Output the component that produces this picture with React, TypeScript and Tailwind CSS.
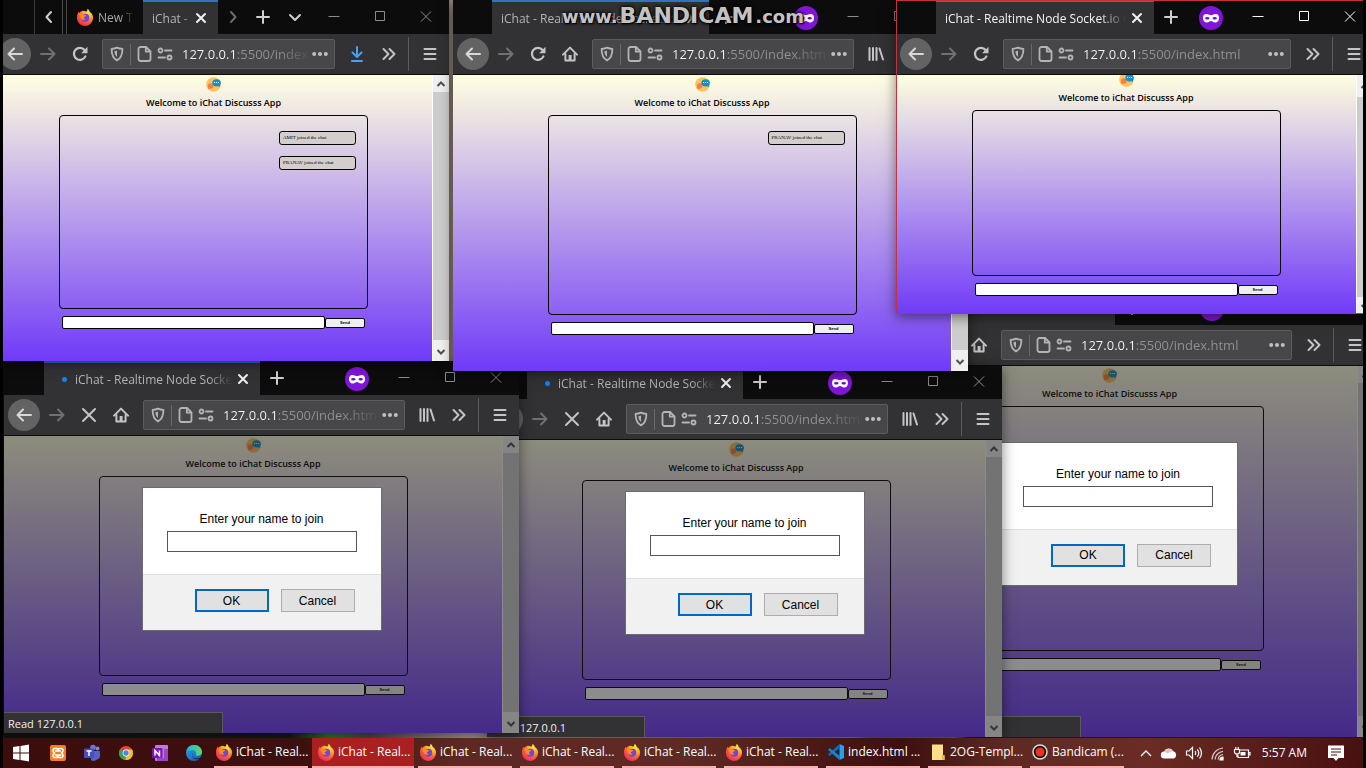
import React, { useId } from "react";
import type { ReactNode } from "react";

const ui = "font-['Open_Sans','Noto_Sans',sans-serif]";

/* ---------- shared gradients ---------- */

function SharedDefs() {
  return (
    <svg className="absolute h-0 w-0" aria-hidden="true">
      <defs>
        <radialGradient id="fox" cx="0.75" cy="0.15" r="1">
          <stop offset="0" stopColor="#ffe84a" />
          <stop offset="0.35" stopColor="#ffae2a" />
          <stop offset="0.65" stopColor="#ff5b36" />
          <stop offset="1" stopColor="#e5225d" />
        </radialGradient>
        <linearGradient id="edge" x1="0" y1="0" x2="1" y2="1">
          <stop offset="0" stopColor="#2aa6d8" />
          <stop offset="0.5" stopColor="#1c7fd0" />
          <stop offset="1" stopColor="#0f4fa0" />
        </linearGradient>
        <linearGradient id="edgeTop" x1="0" y1="0" x2="1" y2="0">
          <stop offset="0" stopColor="#22b3d8" />
          <stop offset="1" stopColor="#5fd66a" />
        </linearGradient>
      </defs>
    </svg>
  );
}

/* ---------- browser icons ---------- */

type Glyph = { children: ReactNode; w?: number };

function Stroke({ children, w = 2 }: Glyph) {
  return (
    <svg width="16" height="16" viewBox="0 0 16 16" fill="none" stroke="currentColor" strokeWidth={w} strokeLinecap="round" strokeLinejoin="round" className="shrink-0" aria-hidden="true">
      {children}
    </svg>
  );
}

const Back = () => <Stroke><path d="M15 8H1.5M7 2.5L1.5 8 7 13.5" /></Stroke>;
const Forward = () => <Stroke><path d="M1 8h13.5M9 2.5L14.5 8 9 13.5" /></Stroke>;
const Reload = () => (
  <Stroke w={2.2}>
    <path d="M13.4 10.4A6 6 0 1 1 12.6 4" />
    <path d="M15.5 0.800v6.400H9.100z" fill="currentColor" stroke="none" />
  </Stroke>
);
const Stop = () => <Stroke><path d="M2 2l12 12M14 2L2 14" /></Stroke>;
const Home = () => (
  <Stroke>
    <path d="M1 8.6L8 1.6l7 7" />
    <path d="M3.4 8v6.6h9.2V8" />
    <path d="M6.6 9h3v5.6h-3z" fill="currentColor" stroke="none" />
  </Stroke>
);
const Shield = () => (
  <Stroke w={1.8}>
    <path d="M8 1.6c1.8.9 3.6 1.2 5.4 1.3 0 5-.9 9-5.4 11.5C3.5 11.9 2.6 7.9 2.6 2.9 4.4 2.8 6.2 2.5 8 1.6z" />
    <path d="M8 4.6v6.4c-1.7-1.3-2.5-3.2-2.6-5.7.9-.1 1.8-.3 2.6-.7z" fill="currentColor" stroke="none" />
  </Stroke>
);
const PageIcon = () => (
  <Stroke w={1.8}>
    <path d="M3.5 1H9l4.500 4.500V13a2 2 0 0 1-2 2h-8a2 2 0 0 1-2-2V3a2 2 0 0 1 2-2z" />
    <path d="M8.8 1.2v4.500h4.500" />
  </Stroke>
);
const Perms = () => (
  <Stroke w={1.8}>
    <circle cx="3.5" cy="4.5" r="2" />
    <path d="M8 4.5h6.500M1.500 11.500H8" />
    <circle cx="12.5" cy="11.5" r="2" />
  </Stroke>
);
const Dots = () => (
  <svg width="16" height="16" viewBox="0 0 16 16" fill="currentColor" className="shrink-0" aria-hidden="true">
    <circle cx="2.2" cy="8" r="2" /><circle cx="8" cy="8" r="2" /><circle cx="13.8" cy="8" r="2" />
  </svg>
);
const Library = () => <Stroke><path d="M1.5 2v12M5 2v12M8.500 2v12M11.500 2.500l3.500 11" /></Stroke>;
const More = () => <Stroke><path d="M2.5 3l5 5-5 5M8.500 3l5 5-5 5" /></Stroke>;
const Menu = () => <Stroke><path d="M2.5 3h11M2.500 8h11M2.500 13h11" /></Stroke>;
const Download = () => <Stroke><path d="M8 1v9.500M3.500 6.500L8 11l4.500-4.500M3 15h10" /></Stroke>;
const Plus = () => <Stroke><path d="M8 2v12M2 8h12" /></Stroke>;
const Cross = () => <Stroke><path d="M4 4l8 8M12 4l-8 8" /></Stroke>;
const ChevDown = () => <Stroke><path d="M3 6l5 5 5-5" /></Stroke>;
const ChevLeft = () => <Stroke><path d="M10 3L5.500 8l4.500 5" /></Stroke>;
const ChevRight = () => <Stroke><path d="M6 3l4.500 5L6 13" /></Stroke>;

function Firefox() {
  return (
    <svg width="18" height="18" viewBox="0 0 18 18" className="shrink-0" aria-hidden="true">
      <path d="M11.5 0.800c1.500 1 2 2 2.200 3.100 1.600.8 3.600 3 3.400 6.100a8.100 8.100 0 0 1-16.200-.4C.9 7 1.700 5.200 2.700 3.500l.4 1.400C4 4 5 3.200 6.200 2.900c1.600-.3 3 .2 4 .8.900-.7 1.300-1.700 1.300-2.900z" fill="url(#fox)" />
      <circle cx="9.3" cy="9.8" r="4" fill="#7543d8" />
      <path d="M2.8 6.500c1.500-1 3.500-.9 4.900.1 1 .6 2.200.5 2.400 1-.3 1-1.700 1-2.200 1.800-.3.600.5 1.700 1.700 1.500-1 1.300-3.400 1.200-4.400-.5-.9-1.500-.6-2.600-2.400-3.900z" fill="#ff8a2c" />
    </svg>
  );
}

function Mask() {
  return (
    <svg width="24" height="24" viewBox="0 0 24 24" className="shrink-0" role="img" aria-label="Private browsing">
      <circle cx="12" cy="12" r="12" fill="#8015d8" />
      <path d="M4 12c0-2.800 1.200-4 3.200-4 2 0 3 1.100 4.800 1.100S14.800 8 16.800 8c2 0 3.200 1.200 3.200 4s-1.500 4.500-3.800 4.500c-2.100 0-2.700-1.500-4.200-1.500s-2.100 1.500-4.200 1.500C5.500 16.500 4 14.800 4 12z" fill="#fff" />
      <ellipse cx="8.3" cy="12.3" rx="2.2" ry="1.3" fill="#6a10bd" />
      <ellipse cx="15.7" cy="12.3" rx="2.2" ry="1.3" fill="#6a10bd" />
    </svg>
  );
}

/* ---------- window frame ---------- */

function IconButton({ label, children, className = "w-8" }: { label: string; children: ReactNode; className?: string }) {
  return (
    <button type="button" aria-label={label} className={`flex h-8 shrink-0 items-center justify-center ${className}`}>
      {children}
    </button>
  );
}

function Caption({ active }: { active?: boolean }) {
  const tone = active ? "text-white" : "text-[#8c8c8c]";
  return (
    <div className={`flex shrink-0 ${tone}`}>
      {[
        ["Minimize", "M6.500 5.500h11"],
        ["Maximize", "M7.500 0.500h9v9h-9z"],
        ["Close", "M7 0.500l10 10M17 0.500l-10 10"],
      ].map(([label, d]) => (
        <button key={label} type="button" aria-label={label} className="flex h-[33px] w-[46px] items-center justify-center">
          <svg width="24" height="11" viewBox="0 0 24 11" fill="none" stroke="currentColor" aria-hidden="true"><path d={d} /></svg>
        </button>
      ))}
    </div>
  );
}

function Tab({ active, loading, className }: { active?: boolean; loading?: boolean; className: string }) {
  return (
    <div className={`flex h-full shrink-0 items-center border-t-2 border-[#2d74c4] bg-[#323234] pr-[9px] ${loading ? "pl-[18px]" : "pl-[9px]"} ${className}`}>
      {loading && <span className="mr-2 h-[5px] w-[5px] shrink-0 rounded-full bg-[#0a84ff]" />}
      <button type="button" className={`min-w-0 flex-1 overflow-hidden whitespace-nowrap pt-[2px] text-left text-[12px] leading-4 [mask-image:linear-gradient(to_right,#000_85%,transparent)] ${active ? "text-[#f4f4f4]" : "text-[#b4b4b4]"}`}>
        iChat - Realtime Node Socket.io C
      </button>
      <button type="button" aria-label="Close tab" className="ml-[3px] shrink-0 text-[#f0f0f0]"><Cross /></button>
    </div>
  );
}

function AddressBar({ wide }: { wide?: boolean }) {
  return (
    <div className="mx-[6px] flex h-[30px] min-w-0 flex-1 items-center rounded-[2px] border border-[#5c5c5e] bg-[#474749] pl-[6px] pr-[6px] text-[#b4b4b4]">
      <Shield />
      <span className="ml-[5px] h-[21px] w-px shrink-0 bg-[#69696b]" />
      <span className="ml-[6px] flex"><PageIcon /></span>
      <span className="ml-1 flex"><Perms /></span>
      <input
        aria-label="Address"
        readOnly
        value="127.0.0.1:5500/index.html"
        className={`ml-[9px] w-0 min-w-0 flex-1 bg-[linear-gradient(to_right,#f6f6f6_55px,#929292_55px)] bg-clip-text text-[13px] leading-5 text-transparent outline-none ${wide ? "" : "[mask-image:linear-gradient(to_right,#000_75%,transparent)]"}`}
      />
      <button type="button" aria-label="Page actions" className="ml-[1px] shrink-0 text-[#c0c0c0]"><Dots /></button>
    </div>
  );
}

type NavProps = { stop?: boolean; home?: boolean; library?: boolean; download?: boolean; wide?: boolean };

function NavBar({ stop, home, library, download, wide }: NavProps) {
  return (
    <div className="flex h-[41px] shrink-0 items-center border-b border-[#0c0c0d] bg-[#323234] pl-1 pr-[3px] text-[#c4c4c4]">
      <IconButton label="Back" className="w-8 rounded-full bg-[#636363] text-[#d8d8d8]"><Back /></IconButton>
      <IconButton label="Forward" className="w-[33px] text-[#707070]"><Forward /></IconButton>
      <IconButton label={stop ? "Stop" : "Reload"}>{stop ? <Stop /> : <Reload />}</IconButton>
      {home && <IconButton label="Home"><Home /></IconButton>}
      <AddressBar wide={wide} />
      {library && <IconButton label="Library"><Library /></IconButton>}
      {download && <IconButton label="Downloads" className="w-8 text-[#45a1ff]"><Download /></IconButton>}
      <IconButton label="More tools"><More /></IconButton>
      <span className="ml-[3px] mr-[5px] h-[34px] w-px shrink-0 bg-[#5a5a5c]" />
      <IconButton label="Menu"><Menu /></IconButton>
    </div>
  );
}

function ScrollBar({ upper = "h-[17px]", lower = "h-[21px]" }: { upper?: string; lower?: string }) {
  const box = "flex w-full shrink-0 items-center justify-center bg-[#f0f0f0] text-[#505050]";
  return (
    <div className="flex w-[17px] shrink-0 flex-col border-l border-white bg-[#cdcdcd]">
      <div className={`${box} ${upper}`}>
        <svg width="10" height="10" viewBox="0 0 10 10" fill="none" stroke="currentColor" strokeWidth="2" aria-hidden="true"><path d="M1.500 7L5 3.500 8.500 7" /></svg>
      </div>
      <div className="flex-1" />
      <div className={`${box} ${lower}`}>
        <svg width="10" height="10" viewBox="0 0 10 10" fill="none" stroke="currentColor" strokeWidth="2" aria-hidden="true"><path d="M1.500 4L5 7.500 8.500 4" /></svg>
      </div>
    </div>
  );
}

/* ---------- chat page ---------- */

function ChatLogo() {
  return (
    <svg width="15" height="15" viewBox="0 0 15 15" className="shrink-0" role="img" aria-label="iChat logo">
      <circle cx="7.5" cy="7.5" r="7.3" fill="#fcc55c" />
      <circle cx="4.6" cy="9" r="2.8" fill="#ff7e45" />
      <path d="M2 12l1-2.500 2.400 1.600z" fill="#ff7e45" />
      <ellipse cx="10.6" cy="5.8" rx="4.3" ry="3.6" fill="#1390c8" />
      <path d="M11.5 8.500l2.600 1.700-.3-3z" fill="#1390c8" />
      <path d="M8.100 5.500h1M10.100 5.500h1M12.100 5.500h1" stroke="#fff" strokeWidth="1" />
    </svg>
  );
}

function ChatPage({ box, messages = [], scrolled }: { box: string; messages?: string[]; scrolled?: boolean }) {
  return (
    <div className="flex min-w-0 flex-1 flex-col items-center overflow-hidden bg-[linear-gradient(to_bottom,#ffffe0,#703af8)]">
      <div className={`flex shrink-0 flex-col items-center pt-[2px] ${scrolled ? "-mt-[5px]" : ""}`}>
        <ChatLogo />
        <h1 className="mt-[5px] mb-[6px] whitespace-nowrap text-[9px] font-semibold leading-3 text-black">Welcome to iChat Discusss App</h1>
        <div className={`flex w-[309px] flex-col items-end gap-[11px] rounded-[4px] border border-black pr-[11px] pt-[15px] ${box}`}>
          {messages.map((m) => (
            <p key={m} className="h-[14px] w-[77px] rounded-[3px] border border-black bg-[#d3cdcb] pl-[3px] font-['Liberation_Serif',serif] text-[5px] leading-3 text-black">{m}</p>
          ))}
        </div>
        <form className="mt-[7px] flex items-center" onSubmit={(e) => e.preventDefault()}>
          <input aria-label="Message" className="h-[13px] w-[263px] rounded-[2px] border border-black bg-white px-1 text-[8px] outline-none" />
          <button type="submit" className="h-[10px] w-10 rounded-[2px] border border-black bg-[#efefef] font-['Liberation_Sans',sans-serif] text-[4px] font-bold leading-[8px] text-black">Send</button>
        </form>
      </div>
    </div>
  );
}

function Prompt() {
  const id = useId();
  const button = "h-[23px] w-[74px] bg-[#e1e1e1] text-[12px] leading-4 text-black";
  return (
    <div className="absolute inset-0 flex flex-col items-center bg-[#1a1a1a]/50">
      <div className="flex-1" />
      <div role="dialog" aria-modal="true" className="w-[240px] shrink-0 border border-[#6b6b6b] bg-[#f1f1f1] font-['Liberation_Sans',Arial,sans-serif]">
        <div className="flex h-[87px] flex-col items-center border-b border-[#dfdfdf] bg-white pt-[23px]">
          <label htmlFor={id} className="text-[12px] leading-4 text-black">Enter your name to join</label>
          <input id={id} type="text" className="mt-1 h-[21px] w-[190px] border border-[#555] bg-white px-1 text-[12px] outline-none" />
        </div>
        <div className="flex h-[55px] justify-end gap-3 pr-[26px] pt-[14px]">
          <button type="button" className={`${button} border-2 border-[#0067c5]`}>OK</button>
          <button type="button" className={`${button} border border-[#adadad]`}>Cancel</button>
        </div>
      </div>
      <div className="flex-[2]" />
    </div>
  );
}

function Status({ text, className }: { text: string; className: string }) {
  return (
    <div className={`absolute bottom-0 left-0 h-[21px] whitespace-nowrap border-r border-t border-[#5a5a5c] bg-[#323234] pl-1 pt-px text-[11px] leading-5 text-[#f0f0f0] ${className}`}>{text}</div>
  );
}

type WindowProps = {
  place: string;
  title: ReactNode;
  nav: NavProps;
  page: ReactNode;
  scroll?: ReactNode;
  prompt?: boolean;
  status?: ReactNode;
  active?: boolean;
  priv?: boolean;
};

function BrowserWindow({ place, title, nav, page, scroll, prompt, status, active, priv = true }: WindowProps) {
  return (
    <section className={`absolute flex flex-col overflow-hidden bg-[#0c0c0d] shadow-[0_3px_12px_rgba(0,0,0,0.5)] ${place}`}>
      <div className="flex h-[34px] shrink-0 items-start">
        {title}
        <div className="flex-1" />
        {priv && <span className="mr-[12px] mt-[6px]"><Mask /></span>}
        <Caption active={active} />
      </div>
      <NavBar {...nav} />
      <div className="relative flex min-h-0 flex-1">
        {page}
        {scroll ?? <ScrollBar />}
        {prompt && <Prompt />}
        {status}
      </div>
      {active && <div className="pointer-events-none absolute inset-0 border border-[#c8303a]" />}
    </section>
  );
}

function NewTab({ className = "" }: { className?: string }) {
  return <button type="button" aria-label="New tab" className={`mt-[9px] shrink-0 text-[#cfcfcf] ${className}`}><Plus /></button>;
}

/* ---------- taskbar ---------- */

function Task({ icon, label, active }: { icon: ReactNode; label: string; active?: boolean }) {
  return (
    <button type="button" className={`flex h-full shrink-0 items-center gap-[3px] whitespace-nowrap border-b-2 border-[#ffadad] text-[12px] text-white ${active ? "-mx-1 w-[102px] bg-[#a82020] pl-[5px]" : "w-[94px] pl-[1px]"}`}>
      {icon}
      <span>{label}</span>
    </button>
  );
}

const VsCode = () => (
  <svg width="18" height="18" viewBox="0 0 18 18" className="shrink-0" aria-hidden="true">
    <path d="M12.5 1L17 3v12l-4.500 2z" fill="#23a0ee" />
    <path d="M12.5 1L1 11.300l1.600 1.600L13 5z" fill="#0a6ab8" />
    <path d="M12.5 17L1 6.700l1.600-1.600L13 13z" fill="#1284d4" />
  </svg>
);
const Folder = () => (
  <svg width="18" height="18" viewBox="0 0 18 18" className="shrink-0" aria-hidden="true">
    <path d="M3 1.500h11v11h1.500V17H3z" fill="#ffe08a" /><path d="M13 12h2.500v5H13z" fill="#f0b93a" />
  </svg>
);
const Recorder = () => (
  <svg width="18" height="18" viewBox="0 0 18 18" className="shrink-0" aria-hidden="true">
    <circle cx="9" cy="9" r="7" fill="#111" stroke="#dcdcdc" strokeWidth="1.5" /><circle cx="9" cy="9" r="4.5" fill="#ee3124" />
  </svg>
);

const launchers: { label: string; art: ReactNode }[] = [
  { label: "Start", art: <path d="M1 3l6.500-1v6.500H1zM8.500 1.900L17 .6v7.900H8.500zM1 9.500h6.500V16L1 15zM8.500 9.500H17v7.900l-8.500-1.300z" fill="#fff" /> },
  {
    label: "XAMPP",
    art: (
      <>
        <rect x="1" y="1" width="16" height="16" rx="2" fill="#f37d22" />
        <path d="M5 4.500h3l1 1.500 1-1.500h3c1.500 1.500 1.300 3-.5 4.500 1.800 1.500 2 3 .5 4.500h-3L9 12l-1 1.500H5c-1.500-1.500-1.300-3 .5-4.500-1.800-1.500-2-3-.5-4.500zM6 7h6M6 11.200h6" fill="none" stroke="#fff" strokeWidth="1.7" strokeLinejoin="round" />
      </>
    ),
  },
  {
    label: "Teams",
    art: (
      <>
        <circle cx="14.5" cy="4.5" r="2" fill="#7b83eb" /><circle cx="10" cy="3.5" r="2.8" fill="#6a74e0" />
        <path d="M8 7h9v5a3.500 3.500 0 0 1-3 3.500A5 5 0 0 1 8 16z" fill="#5560c8" />
        <rect x="1" y="4.5" width="10" height="9.5" rx="1" fill="#4650bd" />
        <path d="M3.500 7h5M6 7v5" stroke="#fff" strokeWidth="1.5" />
      </>
    ),
  },
  {
    label: "Chrome",
    art: (
      <>
        <circle cx="9" cy="9" r="7" fill="#e2453a" />
        <path d="M9 9L2.900 5.500A7 7 0 0 0 8.500 16z" fill="#34a353" /><path d="M9 9h7a7 7 0 0 1-7.500 7z" fill="#fbc116" />
        <path d="M9 9V5.500h6.100A7 7 0 0 1 16 9z" fill="#fbc116" />
        <circle cx="9" cy="9" r="3.4" fill="#fff" /><circle cx="9" cy="9" r="2.7" fill="#4285f4" />
      </>
    ),
  },
  {
    label: "OneNote",
    art: (
      <>
        <rect x="4" y="1" width="13" height="16" rx="1" fill="#c179e0" /><path d="M13 5h4v12H6v-3h7z" fill="#9a45c8" />
        <rect x="1" y="4" width="10.5" height="10" rx="1" fill="#7719aa" />
        <path d="M4 11.500V6.500l4.500 5v-5" fill="none" stroke="#fff" strokeWidth="1.5" />
      </>
    ),
  },
  {
    label: "Edge",
    art: (
      <>
        <circle cx="9" cy="9" r="8" fill="url(#edge)" />
        <path d="M1.500 7C2.500 3 5.500 1 9 1c5 0 8 3.500 8 7 0 2.500-2 3.800-4 3.800-1.500 0-2.500-.5-2.300-1.300.6-1.500 0-4.500-3.200-4.500-2.500 0-4.500 1-6 1z" fill="url(#edgeTop)" />
        <path d="M7.500 9c-1 2.500.8 5.500 4 5.500 1.700 0 3-.5 4.500-1.500l.5.300-1 1.200c-3.500 2-8.500.5-8.500-4z" fill="#451010" />
      </>
    ),
  },
];

function Taskbar() {
  return (
    <footer className={`mx-[3px] flex h-[30px] shrink-0 items-center bg-[linear-gradient(to_right,#3b0e0d_0%,#3d100f_22%,#5e2922_34%,#5f2a24_50%,#3d0f0f_66%,#5f2a22_74%,#6a2c24_84%,#48100f_100%)] ${ui}`}>
      <nav aria-label="Pinned apps" className="flex shrink-0 gap-4 pl-[9px]">
        {launchers.map((l, i) => (
          <button key={l.label} type="button" aria-label={l.label} className={i === 0 ? "mr-[3px]" : ""}>
            <svg width="18" height="18" viewBox="0 0 18 18" aria-hidden="true">{l.art}</svg>
          </button>
        ))}
      </nav>
      <div className="ml-[11px] flex h-full shrink-0 gap-2">
        {[0, 1, 2, 3, 4, 5].map((n) => <Task key={n} icon={<Firefox />} label="iChat - Real..." active={n === 1} />)}
        <Task icon={<VsCode />} label="index.html ..." />
        <Task icon={<Folder />} label="2OG-Templ..." />
        <Task icon={<Recorder />} label="Bandicam (..." />
      </div>
      <div className="ml-auto flex shrink-0 items-center pr-[18px] text-white">
        <div className="flex items-center gap-[7px]">
          <svg width="14" height="16" viewBox="0 0 14 16" fill="none" stroke="currentColor" strokeWidth="1.3" aria-label="Hidden icons"><path d="M2 11l5-5 5 5" /></svg>
          <svg width="18" height="16" viewBox="0 0 18 16" aria-label="OneDrive"><path d="M4.500 13.500a3.500 3.500 0 0 1-.4-7A5 5 0 0 1 13 6a4 4 0 0 1 1 7.500z" fill="#fff" /><path d="M4 6.500C6 2.500 11 3 12.500 6l-5 2.500z" fill="#d8c8c6" /></svg>
          <svg width="18" height="16" viewBox="0 0 18 16" fill="none" stroke="currentColor" strokeWidth="1.2" aria-label="Volume"><path d="M1.500 6h2.500l3.500-3.500v11L4 10H1.500zM10 6q1.500 2 0 4M12.300 4.300q3 3.700 0 7.400M14.500 2.500q4 5.500 0 11" /></svg>
          <svg width="16" height="16" viewBox="0 0 16 16" fill="none" stroke="currentColor" strokeWidth="1.2" aria-label="Network"><path d="M2 14.500A12 12 0 0 1 13 3M5 14.500A9 9 0 0 1 13 6.300M8 14.500a6 6 0 0 1 5-5" opacity=".75" /><path d="M10 15a3 3 0 0 1 3-3v3z" fill="currentColor" /></svg>
          <svg width="18" height="16" viewBox="0 0 18 16" fill="none" stroke="currentColor" strokeWidth="1.2" aria-label="Battery"><path d="M7 5h8.500v7.500H5V10M16 7.500h1V10h-1" /><path d="M7.500 7h5v3.500h-5z" fill="currentColor" stroke="none" /><path d="M1.500 4.500h5V7c0 1.300-1 2-2.500 2S1.500 8.300 1.500 7zM2.800 2v2.500M5.200 2v2.500M4 9v3" /></svg>
        </div>
        <time className="ml-[11px] text-[12px] leading-4">5:57 AM</time>
        <svg width="18" height="18" viewBox="0 0 18 18" className="ml-5" aria-label="Notifications"><path d="M1 1.500h16v12.500h-5.500L9 17l-2.500-3H1z" fill="#fff" /><path d="M4 5h10M4 8h10M4 11h6" stroke="#48100f" strokeWidth="1.2" /></svg>
      </div>
    </footer>
  );
}

/* ---------- desktop ---------- */

export default function App() {
  return (
    <div className="flex h-screen flex-col overflow-hidden bg-black">
      <SharedDefs />
      <main className={`relative mx-[3px] min-h-0 flex-1 overflow-hidden bg-[linear-gradient(to_right,#10130f_0%,#151a12_21%,#2f7a20_24%,#4a483e_27%,#a8978a_34%,#8a7c72_60%,#b3a197_70%,#222a30_71%)] ${ui}`}>
        <BrowserWindow
          place="left-[859px] top-[291px] h-[446px] w-[512px]"
          title={<><Tab className="ml-9 w-[217px]" /><NewTab className="ml-[9px]" /></>}
          nav={{ home: true, wide: true }}
          page={<ChatPage box="h-[245px]" />}
          prompt
          status={<Status text="" className="w-[219px]" />}
        />
        <BrowserWindow
          place="left-[484px] top-[365px] h-[372px] w-[515px]"
          title={<><Tab loading className="ml-10 w-[216px]" /><NewTab className="ml-[9px]" /></>}
          nav={{ home: true, stop: true, library: true }}
          page={<ChatPage box="h-[200px]" />}
          prompt
          status={<Status text="Read 127.0.0.1" className="w-[158px]" />}
        />
        <BrowserWindow
          place="left-[1px] top-[361px] h-[372px] w-[515px]"
          title={<><Tab loading className="ml-10 w-[216px]" /><NewTab className="ml-[9px]" /></>}
          nav={{ home: true, stop: true, library: true }}
          page={<ChatPage box="h-[200px]" />}
          prompt
          status={<Status text="Read 127.0.0.1" className="w-[219px]" />}
        />
        <BrowserWindow
          place="left-[-8px] top-0 h-[361px] w-[454px]"
          priv={false}
          title={
            <div className="flex h-full items-center text-[#cfcfcf]">
              <button type="button" aria-label="Scroll tabs left" className="ml-[39px] flex h-full w-7 items-center justify-center border-l border-[#3a3a3c]"><ChevLeft /></button>
              <div className="flex h-full w-[80px] items-center border-l border-[#4a4a4c]">
                <div className="ml-[3px] flex h-full items-center border-l border-[#4a4a4c] pl-[9px]">
                  <Firefox />
                  <button type="button" className="ml-1 w-9 overflow-hidden whitespace-nowrap pt-[2px] text-left text-[12px] leading-4 text-[#a8a8a8] [mask-image:linear-gradient(to_right,#000_60%,transparent)]">New T</button>
                </div>
              </div>
              <Tab className="ml-[1px] w-[75px]" />
              <span className="ml-[7px] text-[#6c6c6c]"><ChevRight /></span>
              <button type="button" aria-label="New tab" className="ml-[14px]"><Plus /></button>
              <button type="button" aria-label="List tabs" className="ml-4"><ChevDown /></button>
            </div>
          }
          nav={{ download: true }}
          page={<ChatPage box="h-[194px]" messages={["AMIT joined the chat", "PRANAV joined the chat"]} />}
        />
        <BrowserWindow
          place="left-[450px] top-0 h-[371px] w-[515px]"
          title={<><Tab className="ml-[39px] w-[217px]" /><NewTab className="ml-[9px]" /></>}
          nav={{ home: true, library: true }}
          page={<ChatPage box="h-[200px]" messages={["PRANAV joined the chat"]} />}
        />
        <BrowserWindow
          place="left-[893px] top-0 h-[314px] w-[477px]"
          active
          title={<><Tab active className="ml-10 w-[218px]" /><NewTab className="ml-[9px]" /></>}
          nav={{ wide: true }}
          page={<ChatPage scrolled box="h-[166px]" />}
          scroll={<ScrollBar upper="h-[22px]" lower="h-[17px]" />}
        />
        <div className="pointer-events-none absolute left-1/2 top-0 flex -translate-x-1/2 items-baseline gap-[2px] whitespace-nowrap font-['DejaVu_Sans',sans-serif] font-bold leading-8 text-[#dedede]/90 [text-shadow:0_0_3px_#000,0_0_5px_#000,1px_1px_1px_#000]">
          <span className="text-[18px]">www.</span>
          <span className="text-[22px]">BANDICAM</span>
          <span className="text-[18px]">.com</span>
        </div>
      </main>
      <Taskbar />
    </div>
  );
}
